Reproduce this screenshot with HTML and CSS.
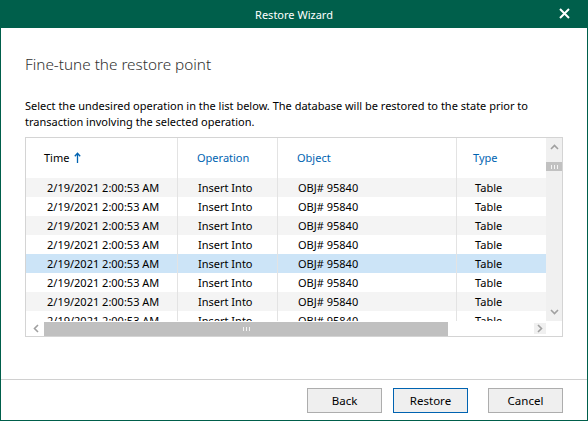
FILE: index.html
```html
<!DOCTYPE html>
<html lang="en">
<head>
    <meta charset="UTF-8">
    <title>Restore Wizard</title>
    <link rel="stylesheet" href="styles.css">
</head>
<body>
    <div class="window">
        <div class="titlebar">
            <span class="title">Restore Wizard</span>
            <svg class="close" width="11" height="11" viewBox="0 0 11 11">
                <path d="M1 1L10 10M10 1L1 10" stroke="#fff" stroke-width="2"/>
            </svg>
        </div>

        <div class="content">
            <h1>Fine-tune the restore point</h1>
            <p class="desc">Select the undesired operation in the list below. The database will be restored to the state prior to<br>transaction involving the selected operation.</p>

            <div class="grid-box">
                <div class="grid-main">
                    <div class="grid-view">
                        <div class="row head">
                            <div class="cell c1">Time
                                <svg class="sort" width="7" height="11" viewBox="0 0 7 11"><path d="M3.5 11V1.5M0.8 4.2L3.5 1.2L6.2 4.2" stroke="#0063b1" stroke-width="1.3" fill="none"/></svg>
                            </div>
                            <div class="cell c2">Operation</div>
                            <div class="cell c3">Object</div>
                            <div class="cell c4">Type</div>
                        </div>
                        <div class="rows">
                            <div class="row alt"><div class="cell c1">2/19/2021 2:00:53 AM</div><div class="cell c2">Insert Into</div><div class="cell c3">OBJ# 95840</div><div class="cell c4">Table</div></div>
                            <div class="row"><div class="cell c1">2/19/2021 2:00:53 AM</div><div class="cell c2">Insert Into</div><div class="cell c3">OBJ# 95840</div><div class="cell c4">Table</div></div>
                            <div class="row alt"><div class="cell c1">2/19/2021 2:00:53 AM</div><div class="cell c2">Insert Into</div><div class="cell c3">OBJ# 95840</div><div class="cell c4">Table</div></div>
                            <div class="row"><div class="cell c1">2/19/2021 2:00:53 AM</div><div class="cell c2">Insert Into</div><div class="cell c3">OBJ# 95840</div><div class="cell c4">Table</div></div>
                            <div class="row selected"><div class="cell c1">2/19/2021 2:00:53 AM</div><div class="cell c2">Insert Into</div><div class="cell c3">OBJ# 95840</div><div class="cell c4">Table</div></div>
                            <div class="row"><div class="cell c1">2/19/2021 2:00:53 AM</div><div class="cell c2">Insert Into</div><div class="cell c3">OBJ# 95840</div><div class="cell c4">Table</div></div>
                            <div class="row alt"><div class="cell c1">2/19/2021 2:00:53 AM</div><div class="cell c2">Insert Into</div><div class="cell c3">OBJ# 95840</div><div class="cell c4">Table</div></div>
                            <div class="row"><div class="cell c1">2/19/2021 2:00:53 AM</div><div class="cell c2">Insert Into</div><div class="cell c3">OBJ# 95840</div><div class="cell c4">Table</div></div>
                        </div>
                    </div>
                    <div class="vscroll">
                        <div class="arrow">
                            <svg width="9" height="6" viewBox="0 0 9 6"><path d="M1 5L4.5 1.5L8 5" stroke="#a0a0a0" stroke-width="1.6" fill="none"/></svg>
                        </div>
                        <div class="vthumb"><span class="grip"></span></div>
                        <div class="vtrack"></div>
                        <div class="arrow">
                            <svg width="9" height="6" viewBox="0 0 9 6"><path d="M1 1L4.5 4.5L8 1" stroke="#a0a0a0" stroke-width="1.6" fill="none"/></svg>
                        </div>
                    </div>
                </div>
                <div class="hscroll">
                    <div class="harrow">
                        <svg width="6" height="9" viewBox="0 0 6 9"><path d="M5 1L1.5 4.5L5 8" stroke="#a0a0a0" stroke-width="1.6" fill="none"/></svg>
                    </div>
                    <div class="hthumb"><span class="grip"></span></div>
                    <div class="htrack"></div>
                    <div class="harrow right">
                        <svg width="6" height="9" viewBox="0 0 6 9"><path d="M1 1L4.5 4.5L1 8" stroke="#a0a0a0" stroke-width="1.6" fill="none"/></svg>
                    </div>
                    <div class="corner"></div>
                </div>
            </div>
        </div>

        <div class="footer">
            <button class="btn">Back</button>
            <button class="btn primary">Restore</button>
            <button class="btn cancel">Cancel</button>
        </div>
    </div>
</body>
</html>
```

FILE: styles.css
```css
body {
    margin: 0;
    padding: 0;
    font-family: 'Noto Sans', 'Open Sans', sans-serif;
    font-size: 11px;
    color: #000;
    background-color: #fff;
}

.window {
    width: 588px;
    height: 421px;
    box-sizing: border-box;
    border: 1px solid #005f4b;
    border-top: none;
    display: flex;
    flex-direction: column;
    background: #fff;
}

.titlebar {
    height: 28px;
    margin: 0 -1px;
    background-color: #005f4b;
    color: #fff;
    display: flex;
    justify-content: center;
    align-items: center;
    position: relative;
}

.title {
    font-size: 11px;
}

.close {
    position: absolute;
    right: 18px;
    top: 8px;
}

.content {
    flex: 1;
    padding: 0 24px 0 24px;
}

.content h1 {
    margin: 26px 0 0 0;
    font-size: 15.3px;
    font-weight: 300;
    line-height: 20px;
    color: #303030;
}

.desc {
    margin: 24px 0 0 0;
    font-size: 11px;
    line-height: 16px;
}

.grid-box {
    margin-top: 7px;
    width: 538px;
    height: 200px;
    box-sizing: border-box;
    border: 1px solid #d4d4d4;
    display: flex;
    flex-direction: column;
}

.grid-main {
    display: flex;
    height: 183px;
}

.grid-view {
    width: 520px;
    overflow: hidden;
}

.row {
    display: flex;
    height: 19px;
    line-height: 19px;
}

.row.head {
    height: 40px;
    line-height: 40px;
    color: #0063b1;
}

.row.alt {
    background-color: #f4f4f4;
}

.row.selected {
    background-color: #cce4f7;
}

.rows {
    height: 143px;
    overflow: hidden;
}

.cell {
    box-sizing: border-box;
    border-right: 1px solid #e3e3e3;
    white-space: nowrap;
    overflow: hidden;
}

.c1 { width: 152px; padding-left: 21px; }
.c2 { width: 100px; padding-left: 20px; }
.c3 { width: 179px; padding-left: 20px; }
.c4 { width: 89px; padding-left: 18px; border-right: none; }

.head .c1 { padding-left: 18px; color: #000; }
.head .c2 { padding-left: 19px; }
.head .c3 { padding-left: 19px; }
.head .c4 { padding-left: 16px; }

.sort {
    margin-left: 2px;
    vertical-align: -1px;
}

.vscroll {
    width: 16px;
    background-color: #f0f0f0;
    display: flex;
    flex-direction: column;
    align-items: center;
}

.arrow {
    height: 18px;
    width: 16px;
    display: flex;
    justify-content: center;
    align-items: center;
}

.vthumb {
    width: 16px;
    height: 9px;
    margin-top: 6px;
    background-color: #c1c1c1;
    display: flex;
    justify-content: center;
    align-items: center;
}

.vtrack {
    flex: 1;
}

.grip {
    width: 8px;
    height: 4px;
    background-image: radial-gradient(circle, #f4f4f4 0.9px, transparent 1px);
    background-size: 3px 2px;
}

.hscroll {
    display: flex;
    height: 15px;
}

.harrow {
    width: 18px;
    padding-left: 2px;
    box-sizing: border-box;
    display: flex;
    justify-content: center;
    align-items: center;
}

.harrow.right {
    width: 12px;
    padding-left: 0;
    margin: 2px 0;
    background-color: #f0f0f0;
}

.hthumb {
    width: 404px;
    margin: 1px 0 0 0;
    background-color: #c0c0c0;
    display: flex;
    justify-content: center;
    align-items: center;
}

.htrack {
    flex: 1;
}

.corner {
    width: 16px;
}

.footer {
    height: 41px;
    border-top: 1px solid #d0d0d0;
    display: flex;
    justify-content: flex-end;
    align-items: flex-start;
    padding: 8px 24px 0 0;
    box-sizing: border-box;
}

.btn {
    width: 75px;
    height: 25px;
    margin-left: 11px;
    font-family: 'Noto Sans', 'Open Sans', sans-serif;
    font-size: 11.5px;
    color: #000;
    background-color: #efefef;
    border: 1px solid #adadad;
    padding: 0;
}

.btn.primary {
    border-color: #0063b1;
}

.btn.cancel {
    margin-left: 20px;
}
```
